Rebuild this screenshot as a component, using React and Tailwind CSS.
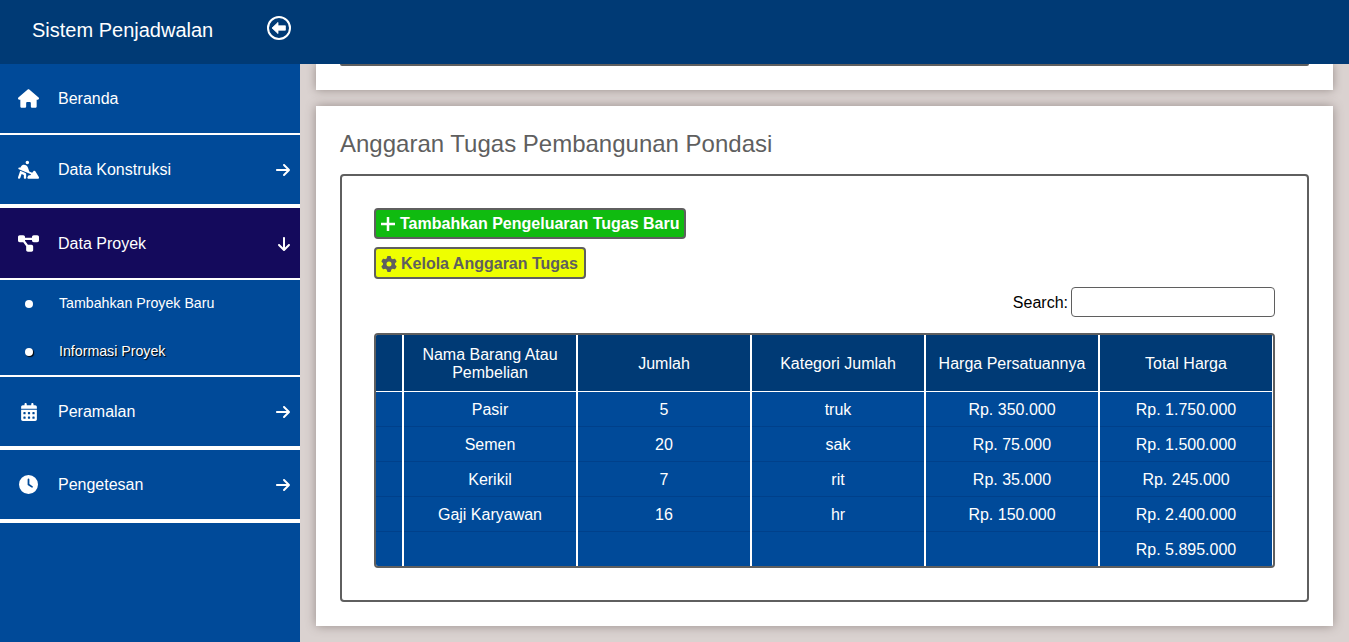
import { FaHouse, FaDiagramProject, FaCalendarDays, FaClock, FaArrowRight, FaArrowDown, FaGear, FaPersonDigging } from 'react-icons/fa6';

const rows = [
  ['Pasir', '5', 'truk', 'Rp. 350.000', 'Rp. 1.750.000'],
  ['Semen', '20', 'sak', 'Rp. 75.000', 'Rp. 1.500.000'],
  ['Kerikil', '7', 'rit', 'Rp. 35.000', 'Rp. 245.000'],
  ['Gaji Karyawan', '16', 'hr', 'Rp. 150.000', 'Rp. 2.400.000'],
  ['', '', '', '', 'Rp. 5.895.000'],
];

const headers = ['', 'Nama Barang Atau Pembelian', 'Jumlah', 'Kategori Jumlah', 'Harga Persatuannya', 'Total Harga'];

function MenuItem({ icon: Icon, iconSize = 'text-[21px]', label, arrow: Arrow, active, size }) {
  return (
    <div className={`flex items-center pl-[18px] pr-[9px] border-white ${size} ${active ? 'bg-[#140a5c]' : ''}`}>
      <span className="flex w-[21px] justify-center"><Icon className={iconSize} /></span>
      <span className={`ml-[19px] flex-1 ${active ? 'translate-y-px' : ''}`}>{label}</span>
      {Arrow && <Arrow className={`text-[16px] ${active ? 'translate-x-px translate-y-px' : ''}`} />}
    </div>
  );
}

export default function App() {
  return (
    <div className="flex h-[642px] flex-col overflow-hidden font-['Liberation_Sans',Arial,sans-serif] text-[16px]">
      {/* Header */}
      <header className="relative z-10 flex h-16 shrink-0 items-center bg-[#003a75] pb-1 text-white">
        <span className="ml-8 text-[20px]">Sistem Penjadwalan</span>
        <svg className="mb-1 ml-[54px]" width="24" height="24" viewBox="0 0 24 24" fill="none">
          <circle cx="12" cy="12" r="11" stroke="white" strokeWidth="2" />
          <path d="M5 12l6-5.6v3.4h7.4v4.4H11v3.4z" fill="white" stroke="white" strokeWidth="0.8" strokeLinejoin="round" />
        </svg>
      </header>

      <div className="flex min-h-0 flex-1">
        {/* Sidebar */}
        <aside className="w-[300px] shrink-0 bg-[#004a99] text-white">
          <MenuItem icon={FaHouse} label="Beranda" size="h-[71px] border-b-2" />
          <MenuItem icon={FaPersonDigging} label="Data Konstruksi" arrow={FaArrowRight} size="h-[73px] border-b-4" />
          <MenuItem icon={FaDiagramProject} label="Data Proyek" arrow={FaArrowDown} active size="h-[72px] border-b-2" />
          <div className="h-[97px] border-b-2 border-white text-[14.2px]">
            <div className="flex h-[47px] items-center pl-[25px]">
              <span className="h-[8px] w-[8px] rounded-full bg-white" />
              <span className="ml-[26px]">Tambahkan Proyek Baru</span>
            </div>
            <div className="flex h-[48px] items-center pl-[25px] pt-[2px] [text-shadow:1px_1px_1px_#000]">
              <span className="h-[8px] w-[8px] rounded-full bg-white shadow-[1px_1px_1px_#000]" />
              <span className="ml-[26px]">Informasi Proyek</span>
            </div>
          </div>
          <MenuItem icon={FaCalendarDays} iconSize="text-[18px]" label="Peramalan" arrow={FaArrowRight} size="h-[73px] border-b-4" />
          <MenuItem icon={FaClock} iconSize="text-[19px]" label="Pengetesan" arrow={FaArrowRight} size="h-[73px] border-b-4" />
        </aside>

        {/* Content */}
        <main className="flex flex-1 flex-col gap-4 bg-[#dad2d0] pl-4 pr-4">
          <div className="h-[26px] shrink-0 bg-white px-6 shadow-[0_0_10px_#978d8a]">
            <div className="h-[2px] rounded-b border-b-2 border-[#5f5f5f]" />
          </div>

          <section className="h-[520px] shrink-0 bg-white px-6 shadow-[0_0_10px_#978d8a]">
            <h2 className="pt-[23px] text-[24px] leading-[30px] text-[#5f5f5f]">Anggaran Tugas Pembangunan Pondasi</h2>

            <div className="mt-[15px] h-[428px] rounded border-2 border-[#5f5f5f] px-8 pt-8">
              <div className="flex flex-col items-start gap-2">
                <button className="flex h-[31px] items-center gap-[5px] rounded border-2 border-[#5f5f5f] bg-[#10bb10] px-[5px] font-bold text-white">
                  <svg width="14" height="14" viewBox="0 0 14 14" fill="none" stroke="white" strokeWidth="2.5">
                    <path d="M7 0v14M0 7h14" />
                  </svg>
                  Tambahkan Pengeluaran Tugas Baru
                </button>
                <button className="flex h-[32px] items-center gap-[4px] rounded border-2 border-[#5f5f5f] bg-[#eeff00] pl-[5px] pr-[6px] pt-[2px] font-bold text-[#5f5f5f]">
                  <FaGear className="text-[16px]" />
                  Kelola Anggaran Tugas
                </button>
              </div>

              <div className="mt-2 flex items-center justify-end gap-[3px] text-black">
                <label className="pt-[2px]">Search:</label>
                <input className="h-[30px] w-[204px] rounded border border-[#5f5f5f] bg-white" />
              </div>

              <div className="mt-4 overflow-hidden rounded border-2 border-[#5f5f5f]">
                <table className="w-[896px] table-fixed border-collapse bg-[#004a99] text-center text-white">
                  <colgroup>
                    <col className="w-[27px]" />
                    <col className="w-[174px]" />
                    <col className="w-[174px]" />
                    <col className="w-[174px]" />
                    <col className="w-[174px]" />
                    <col />
                  </colgroup>
                  <thead>
                    <tr className="h-[56px] bg-[#003a75]">
                      {headers.map((h, i) => (
                        <th key={i} className={`border-b border-white px-2 pt-[3px] font-normal leading-[18px] ${i < 5 ? 'border-r-2 border-r-white' : ''}`}>{h}</th>
                      ))}
                    </tr>
                  </thead>
                  <tbody>
                    {rows.map((row, r) => (
                      <tr key={r} className="h-[35px]">
                        {['', ...row].map((c, i) => (
                          <td key={i} className={`pt-[2px] ${r < 4 ? 'border-b border-[#00408a]' : ''} ${i < 5 ? 'border-r-2 border-r-white' : ''}`}>{c}</td>
                        ))}
                      </tr>
                    ))}
                  </tbody>
                </table>
              </div>
            </div>
          </section>
        </main>
      </div>
    </div>
  );
}
